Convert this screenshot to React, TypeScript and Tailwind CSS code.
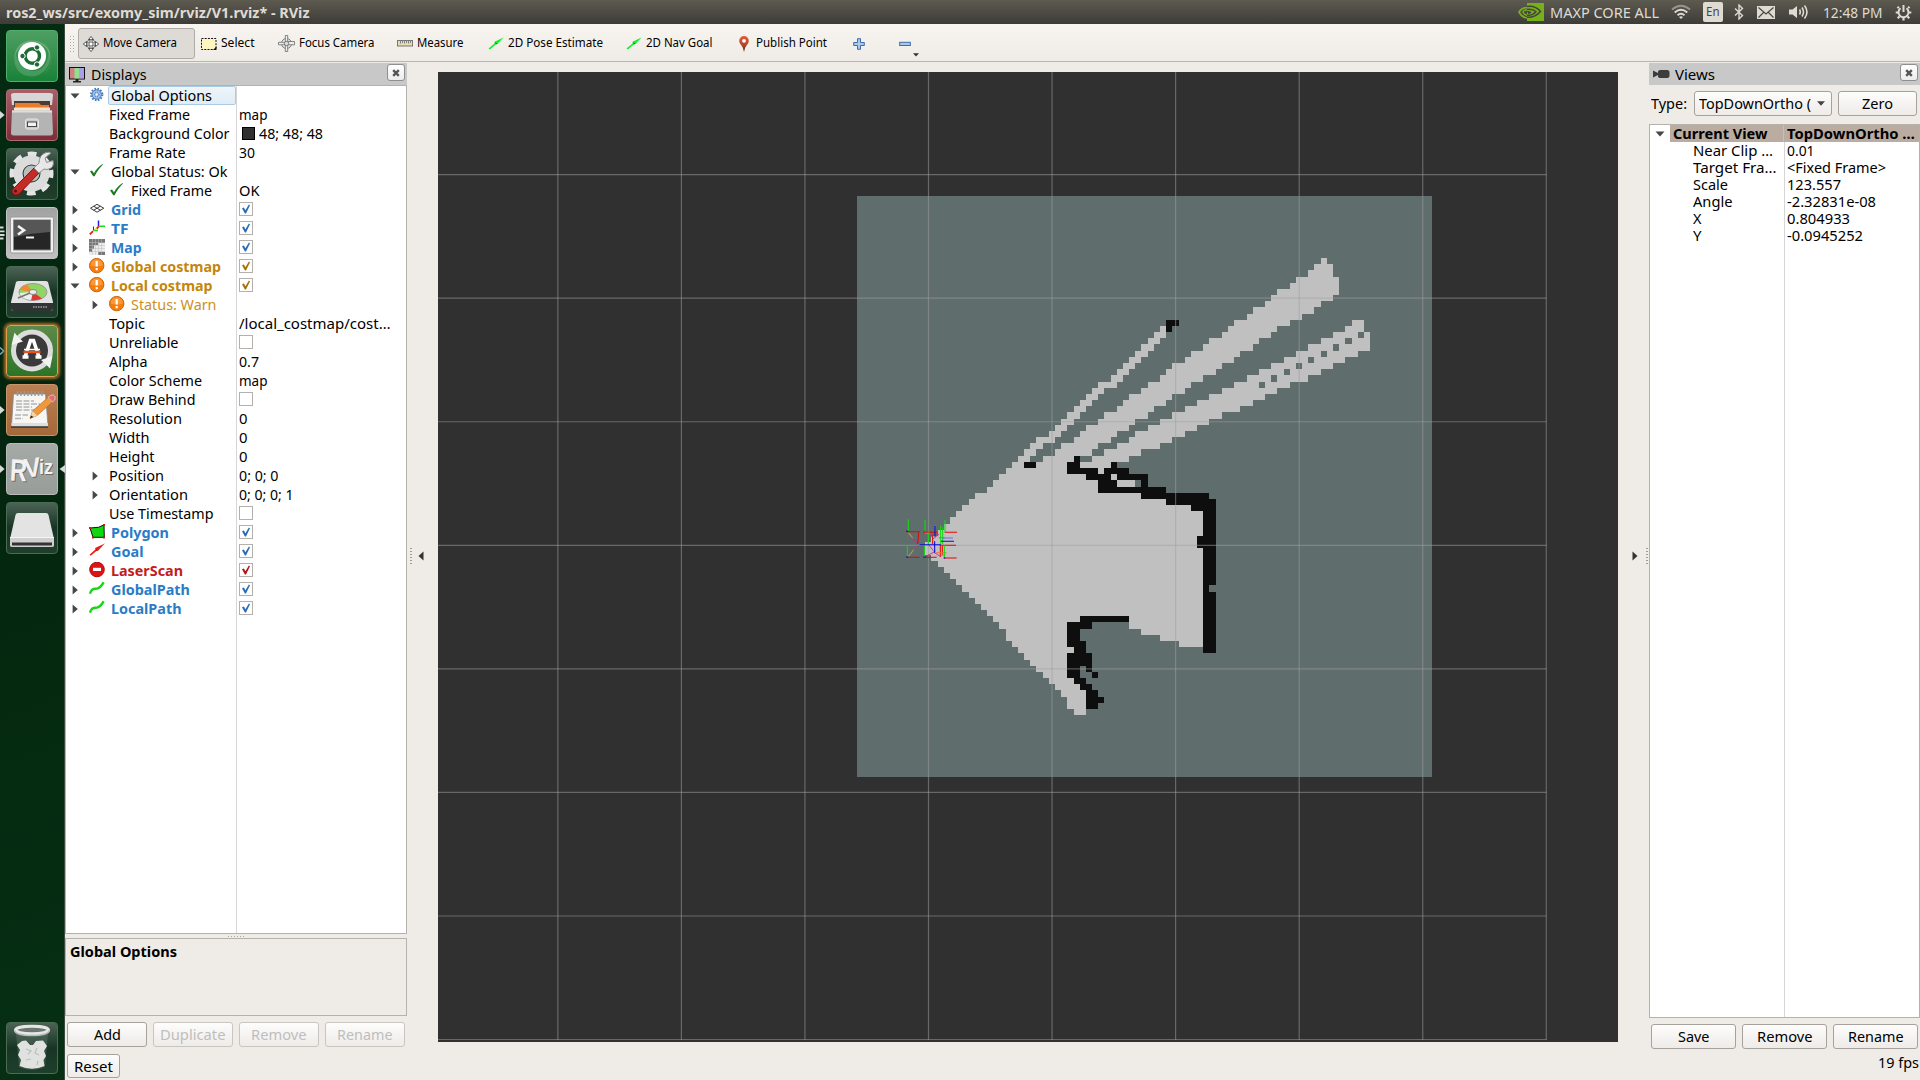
import { useLayoutEffect, useRef, type ReactNode } from "react";

/** One line of text, condensed or widened to the given width. */
function Fit({ w, className = "", children }: { w: number; className?: string; children: ReactNode }) {
  const ref = useRef<HTMLSpanElement>(null);
  useLayoutEffect(() => {
    const el = ref.current;
    if (el && el.offsetWidth) {
      el.style.transform = "none";
      const natural = el.getBoundingClientRect().width;
      el.style.transform = `scaleX(${w / natural})`;
    }
  }, [w]);
  return (
    <span className="block shrink-0" style={{ width: w }}>
      <span ref={ref} className={"inline-block origin-left whitespace-pre " + className}>
        {children}
      </span>
    </span>
  );
}

/* ---------- tree icons ---------- */

const Gear = () => (
  <svg width="16" height="16" viewBox="0 0 16 16">
    <circle cx="7.7" cy="7.5" r="5.6" fill="none" stroke="#4a7dbd" strokeWidth="2.2" strokeDasharray="1.6 1.33" />
    <circle cx="7.7" cy="7.5" r="4.7" fill="#9dc0e8" stroke="#4679b8" strokeWidth="1" />
    <circle cx="7.7" cy="7.5" r="2.3" fill="none" stroke="#4679b8" strokeWidth="1" strokeDasharray="1.2 0.8" />
    <circle cx="7.7" cy="7.5" r="1" fill="#fff" />
  </svg>
);
const Tick = () => (
  <svg width="16" height="16" viewBox="0 0 16 16">
    <path d="M1 8.2 L3 7.4 L5 10.3 C7 6.5 9.5 3.5 13.6 1 L14 1.4 C10.5 4.8 7.8 8.6 5.6 13.2 L4.2 13.2 Z" fill="#1f7a22" />
  </svg>
);
const GridIcon = () => (
  <svg width="16" height="16" viewBox="0 0 16 16" fill="none" stroke="#3c3c3c" strokeWidth="1">
    <path d="M1.5 7.2 L8 3.3 L14.8 7.2 L8 11.2 Z M4.7 5.2 L11.4 9.2 M11.4 5.2 L4.7 9.2" />
  </svg>
);
const TfIcon = () => (
  <svg width="16" height="16" viewBox="0 0 16 16" fill="none" strokeWidth="1.5">
    <path d="M9.5 6 V.5" stroke="#2020e8" />
    <path d="M4.5 10.5 V6.5" stroke="#2020e8" strokeWidth="1" />
    <path d="M10 6.3 H16 M4.500 10.500 H9" stroke="#18dd18" />
    <path d="M9.800 6.500 L7.500 8.800 M4 11.200 L.8 14.300" stroke="#e81818" strokeWidth="1.800" />
    <path d="M4.500 10.500 L8 8" stroke="#e8c018" strokeWidth="1" />
  </svg>
);
const MapIcon = () => (
  <svg width="16" height="16" viewBox="0 0 16 16">
    <path fill="#ececec" d="M0 0h16v16H0z" />
    <path fill="#777" d="M0 0h7v6H3v7H0zM7 0h9v4H9V6H7zM9 13h7v3H9zM3 6h2v4H3z" />
    <path stroke="#bcbcbc" strokeWidth=".5" d="M0 3.5h16M0 6.5h16M0 9.5h16M0 12.5h16M3.5 0v16M6.5 0v16M9.5 0v16M12.5 0v16" />
  </svg>
);
const Warn = () => (
  <svg width="16" height="16" viewBox="0 0 16 16">
    <circle cx="7.7" cy="7.6" r="7.2" fill="#f57d0c" stroke="#c86408" strokeWidth="1" />
    <path d="M1.6 7.4a6.1 6.1 0 0 1 12.2 0q-6 2-12.2 0z" fill="#ffa34d" opacity=".7" />
    <path d="M6.6 3h2.2v5.6H6.6zM6.6 10h2.2v2.2H6.6z" fill="#fff" />
  </svg>
);
const Poly = () => (
  <svg width="16" height="16" viewBox="0 0 16 16">
    <path d="M1 4 L9.5 3.3 L15 .8 L15.3 13.3 L4 13.3 Z" fill="#10d810" stroke="#111" strokeWidth="1" />
    <path d="M0 3h2v2H0zM14 0h2v2h-2zM3 12.5h2v2H3zM14 12.5h2v2h-2z" fill="#e01010" />
  </svg>
);
const GoalIcon = () => (
  <svg width="16" height="16" viewBox="0 0 16 16">
    <path d="M.5 11.8 L6.5 6.2 L6 5 L15.8 .5 L9.3 7.5 L8 7.4 L1.8 12.8 Z" fill="#f02010" />
    <path d="M6.5 6 L9.2 7.4 L7.8 8z" fill="#901008" />
  </svg>
);
const Stop = () => (
  <svg width="16" height="16" viewBox="0 0 16 16">
    <circle cx="8" cy="7.5" r="7.3" fill="#dd1414" stroke="#b00c0c" strokeWidth="1" />
    <rect x="4" y="5.8" width="8" height="3.2" fill="#fff" />
  </svg>
);
const PathIcon = () => (
  <svg width="16" height="16" viewBox="0 0 16 16">
    <path d="M1 12.8 C2.5 7 5 8 8 7.6 C11.5 7 12 5 14.7 1.2" fill="none" stroke="#14d814" strokeWidth="2.4" />
  </svg>
);

const ICONS = { gear: Gear, tick: Tick, grid: GridIcon, tf: TfIcon, map: MapIcon, warn: Warn, poly: Poly, goal: GoalIcon, stop: Stop, path: PathIcon };

const Arrow = ({ open }: { open: boolean }) => (
  <svg width="10" height="10" viewBox="0 0 10 10" fill="#474747">
    {open ? <path d="M.5 2.5 H9.5 L5 7.5 Z" /> : <path d="M2.6 .5 V9.5 L7.8 5 Z" />}
  </svg>
);

const Check = ({ on, color = "#2a6cb8" }: { on: boolean; color?: string }) => (
  <svg width="14" height="14" viewBox="0 0 14 14" className="block">
    <rect x=".5" y=".5" width="13" height="13" fill="#fff" stroke="#b4b0ab" />
    {on && <path d="M3 6.3 L4.9 5.6 L6.4 8.2 L9.9 2.6 L11 3.2 L7 11.4 L5.9 11.4 Z" fill={color} />}
  </svg>
);

/* ---------- displays tree ---------- */

type Row = {
  t: string;
  w: number;
  d?: number;
  open?: boolean;
  icon?: keyof typeof ICONS;
  cls?: string;
  v?: string;
  vw?: number;
  check?: string;
  swatch?: boolean;
  sel?: boolean;
};
const BLUE = "font-bold text-[#2a7cc7]";
const AMBER = "font-bold text-[#c4860c]";
const ROWS: Row[] = [
  { t: "Global Options", w: 101, open: true, icon: "gear", sel: true },
  { t: "Fixed Frame", w: 81, d: 1, v: "map", vw: 28.5 },
  { t: "Background Color", w: 120.5, d: 1, v: "48; 48; 48", vw: 64, swatch: true },
  { t: "Frame Rate", w: 76.5, d: 1, v: "30", vw: 16 },
  { t: "Global Status: Ok", w: 116.5, open: true, icon: "tick" },
  { t: "Fixed Frame", w: 81, d: 1, icon: "tick", v: "OK", vw: 20.5 },
  { t: "Grid", w: 30, open: false, icon: "grid", cls: BLUE, check: "#2a6cb8" },
  { t: "TF", w: 17.5, open: false, icon: "tf", cls: BLUE, check: "#2a6cb8" },
  { t: "Map", w: 30.5, open: false, icon: "map", cls: BLUE, check: "#2a6cb8" },
  { t: "Global costmap", w: 110, open: false, icon: "warn", cls: AMBER, check: "#a8700a" },
  { t: "Local costmap", w: 101.5, open: true, icon: "warn", cls: AMBER, check: "#a8700a" },
  { t: "Status: Warn", w: 85.5, d: 1, open: false, icon: "warn", cls: "text-[#cc8f1c]" },
  { t: "Topic", w: 36, d: 1, v: "/local_costmap/cost…", vw: 151.5 },
  { t: "Unreliable", w: 69.5, d: 1, check: "" },
  { t: "Alpha", w: 38.5, d: 1, v: "0.7", vw: 20 },
  { t: "Color Scheme", w: 93, d: 1, v: "map", vw: 28.5 },
  { t: "Draw Behind", w: 86.5, d: 1, check: "" },
  { t: "Resolution", w: 73, d: 1, v: "0", vw: 8.5 },
  { t: "Width", w: 40.5, d: 1, v: "0", vw: 8.5 },
  { t: "Height", w: 45.5, d: 1, v: "0", vw: 8.5 },
  { t: "Position", w: 55, d: 1, open: false, v: "0; 0; 0", vw: 39.5 },
  { t: "Orientation", w: 79, d: 1, open: false, v: "0; 0; 0; 1", vw: 54.5 },
  { t: "Use Timestamp", w: 104.5, d: 1, check: "" },
  { t: "Polygon", w: 58, open: false, icon: "poly", cls: BLUE, check: "#2a6cb8" },
  { t: "Goal", w: 32.5, open: false, icon: "goal", cls: BLUE, check: "#2a6cb8" },
  { t: "LaserScan", w: 72, open: false, icon: "stop", cls: "font-bold text-[#c41c1c]", check: "#b01818" },
  { t: "GlobalPath", w: 79, open: false, icon: "path", cls: BLUE, check: "#2a6cb8" },
  { t: "LocalPath", w: 70.5, open: false, icon: "path", cls: BLUE, check: "#2a6cb8" },
];

function TreeRow({ r }: { r: Row }) {
  const Icon = r.icon ? ICONS[r.icon] : null;
  return (
    <div className="flex h-[19px] items-center leading-[19px]">
      <div className="flex h-full w-[170px] shrink-0 items-center">
        <div className={r.d ? "w-5 shrink-0" : "w-0"} />
        <div className="flex w-[23px] shrink-0 items-center pl-[4px]">{r.open !== undefined && <Arrow open={r.open} />}</div>
        {Icon && (
          <div className="w-[19px] shrink-0 pb-px">
            <Icon />
          </div>
        )}
        <div
          className={
            "flex h-[19px] flex-1 items-center border pl-[2px] " +
            (r.sel ? "rounded-[2px] border-[#a9cce4] bg-linear-to-b from-[#eef5fb] to-[#e0ecf5]" : "border-transparent") +
            (Icon ? "" : " -ml-[3px]")
          }
        >
          <Fit w={r.w} className={r.cls}>
            {r.t}
          </Fit>
        </div>
      </div>
      <div className="flex h-full items-center pl-[3px]">
        {r.swatch && <div className="mr-[4px] ml-[3px] h-[13px] w-[13px] border border-black bg-[#303030]" />}
        {r.v && <Fit w={r.vw!}>{r.v}</Fit>}
        {r.check !== undefined && (
          <div className="pb-px">
            <Check on={r.check !== ""} color={r.check} />
          </div>
        )}
      </div>
    </div>
  );
}

/* ---------- costmap: [row, start, end, start, end, ...] in cells ---------- */

const FREE: number[][] = [
  [10, 75, 76], [11, 74, 77], [12, 73, 77], [13, 71, 78], [14, 70, 78], [15, 68, 78], [16, 67, 77], [17, 66, 75],
  [18, 64, 74], [19, 63, 72], [20, 61, 70, 80, 82], [21, 49, 50, 60, 68, 79, 82], [22, 48, 50, 59, 67, 77, 81, 82, 83],
  [23, 47, 49, 57, 65, 75, 79, 80, 83], [24, 46, 48, 56, 64, 73, 77, 78, 83], [25, 45, 47, 54, 62, 71, 75, 76, 81],
  [26, 44, 46, 53, 61, 69, 73, 74, 79], [27, 43, 45, 51, 59, 67, 71, 72, 77], [28, 42, 44, 50, 58, 65, 69, 70, 75],
  [29, 41, 43, 49, 56, 63, 67, 68, 73], [30, 39, 42, 47, 54, 61, 65, 66, 70], [31, 38, 40, 46, 53, 59, 68],
  [32, 37, 39, 44, 51, 57, 66], [33, 36, 38, 43, 50, 55, 64], [34, 35, 37, 42, 48, 53, 62], [35, 34, 36, 40, 47, 51, 59],
  [36, 33, 35, 39, 45, 49, 57], [37, 32, 34, 37, 44, 47, 55], [38, 31, 33, 36, 42, 45, 53], [39, 29, 32, 35, 41, 44, 51],
  [40, 28, 30, 33, 39, 42, 49], [41, 27, 29, 32, 38, 40, 46], [42, 26, 28, 30, 35, 38, 44], [43, 25, 41], [44, 24, 40],
  [45, 23, 42], [46, 22, 45], [47, 21, 39], [48, 19, 46], [49, 18, 50], [50, 17, 54], [51, 16, 56], [52, 15, 56],
  [53, 14, 56], [54, 13, 56], [55, 12, 56], [56, 11, 56], [57, 11, 56], [58, 12, 56], [59, 13, 56], [60, 14, 56],
  [61, 15, 56], [62, 16, 56], [63, 17, 56], [64, 18, 56], [65, 19, 56], [66, 20, 56], [67, 21, 56], [68, 22, 56],
  [69, 23, 34, 44, 56], [70, 24, 34, 46, 56], [71, 24, 34, 49, 56], [72, 25, 34, 52, 56], [73, 26, 35], [74, 27, 34],
  [75, 28, 34], [76, 29, 34], [77, 30, 34], [78, 31, 35], [79, 32, 36], [80, 33, 37], [81, 34, 37], [82, 34, 37], [83, 35, 37],
];
const WALLS: number[][] = [
  [20, 50, 52], [21, 50, 51], [42, 35, 36], [43, 27, 29, 34, 36, 41, 42], [44, 34, 39, 40, 44], [45, 37, 41, 42, 47],
  [46, 39, 42, 46, 47], [47, 39, 50], [48, 46, 57], [49, 50, 58], [50, 54, 58], [51, 56, 58], [52, 56, 58], [53, 56, 58],
  [54, 56, 58], [55, 55, 58], [56, 55, 58], [57, 56, 58], [58, 56, 58], [59, 56, 58], [60, 56, 58], [61, 56, 58],
  [62, 56, 58], [63, 56, 57], [64, 56, 58], [65, 56, 58], [66, 56, 58], [67, 56, 58], [68, 36, 44, 56, 58],
  [69, 34, 38, 56, 58], [70, 34, 36, 56, 58], [71, 34, 36, 56, 58], [72, 34, 37, 56, 58], [73, 35, 37, 56, 58],
  [74, 34, 38], [75, 34, 38], [76, 34, 36, 37, 38], [77, 34, 36, 38, 39], [78, 35, 37], [79, 36, 38], [80, 37, 39],
  [81, 37, 40], [82, 37, 39],
];
const CELL = 6.178;
const X = (c: number) => Math.round(857.3 + c * CELL);
const Y = (r: number) => Math.round(196.2 + r * CELL);
function cells(data: number[][]) {
  let d = "";
  for (const [r, ...runs] of data)
    for (let i = 0; i < runs.length; i += 2) d += `M${X(runs[i])} ${Y(r)}H${X(runs[i + 1])}V${Y(r + 1)}H${X(runs[i])}Z`;
  return d;
}

const V_LINES = [557.85, 681.4, 804.95, 928.5, 1052.05, 1175.6, 1299.2, 1422.75, 1546.3];
const H_LINES = [174.6, 298.2, 421.75, 545.3, 668.9, 792.4, 916, 1039.5];

function Scene() {
  return (
    <svg width="1180" height="970" viewBox="438 72 1180 970" className="block shrink-0 bg-[#303030]">
      <rect x="857" y="196" width="575" height="581" fill="#5f6e6c" />
      <path d={cells(FREE)} fill="#c0c0c0" shapeRendering="crispEdges" />
      <path d={cells(WALLS)} fill="#0e0e0e" shapeRendering="crispEdges" />
      <g stroke="#a0a0a0" strokeOpacity=".5" strokeWidth="1.2">
        {V_LINES.map((x) => (
          <line key={x} x1={x} x2={x} y1="72" y2="1040" />
        ))}
        {H_LINES.map((y) => (
          <line key={y} x1="438" x2="1546.5" y1={y} y2={y} />
        ))}
      </g>
      <g transform="translate(850 440) scale(.33333)" fill="none" strokeWidth="3.2">
        <path stroke="#a0a050" d="M175 278 L190 296 M175 350 L192 328" />
        <path stroke="#d82088" strokeWidth="2.600" d="M186 292 L206 314 L190 332 M238 280 L250 296 L268 282 M236 314 L250 332 M230 348 L256 334 M250 336 L272 350" />
        <path stroke="#e00808" d="M170 275 H210 M220 277 H262 M284 277 H321 M206 278 L203 312 M272 316 H318 M170 352 H209 M220 352 H260 M282 354 H320 M271 312 V350 M277 318 V344 M248 284 V312" />
        <path stroke="#f07030" d="M258 338 H290 M272 346 H286 M225 280 H240" />
        <path stroke="#12d812" d="M175 238 V273 M225 240 V272 M285 240 V276 M272 256 V314 M278 262 V312 M235 278 V314 M172 316 V350 M223 314 V352 M283 316 V354" />
        <path stroke="#7070d8" d="M278 294 H309 M256 256 V276" />
        <path stroke="#0808d8" d="M255 258 V290 M273 304 H312 M254 304 V338 M208 314 H272 M168 274 H175 M168 351 H175 M220 351 H227 M281 354 H286" />
        <path stroke="#10b0a0" d="M266 293 H284 M203 315 H209" />
      </g>
    </svg>
  );
}

/* ---------- launcher ---------- */

const Tile = ({ cls, children }: { cls: string; children: ReactNode }) => (
  <div className={"h-[52px] w-[52px] shrink-0 overflow-hidden rounded-[4px] border " + cls}>
    <svg width="52" height="52" viewBox="0 0 52 52" className="-m-px block">
      {children}
    </svg>
  </div>
);
const DARK = "border-[#4c6a56] bg-linear-to-b from-[#4b6355] via-[#173524] to-[#1f3f2c]";
const Pip = ({ cls = "" }: { cls?: string }) => (
  <svg width="5" height="10" viewBox="0 0 5 10" className={"shrink-0 " + cls}>
    <path d="M0 1 L4.6 5 L0 9Z" fill="#d8d8d8" />
  </svg>
);

const Launcher = () => (
  <div className="flex w-[65px] shrink-0 flex-col border-r border-[#3c4c40] bg-[linear-gradient(160deg,#042c12_0%,#03240f_35%,#04290f_60%,#062f14_100%)] pt-[6px]">
    <div className="flex flex-col gap-[7px]">
      <div className="flex items-center pl-[6px]">
        <Tile cls="border-[#4fae6c] bg-linear-to-b from-[#4d9f62] to-[#168238]">
          <path d="M8 30 C8 12 24 6 38 14 C46 20 48 36 38 44 C50 32 44 16 30 12 C20 10 10 18 8 30Z" fill="#fff" opacity=".22" />
          <path d="M38 12 C52 26 40 50 22 46 C10 44 6 32 10 24 C12 40 30 46 38 36 C44 28 44 18 38 12Z" fill="#fff" opacity=".16" />
          <circle cx="26" cy="26" r="14" fill="#fff" />
          <circle cx="26.3" cy="26" r="7.2" fill="none" stroke="#1c6c34" strokeWidth="3.4" />
          <g fill="#1c6c34" stroke="#fff" strokeWidth="1">
            <circle cx="16.5" cy="26" r="2.7" />
            <circle cx="31" cy="17.5" r="2.7" />
            <circle cx="31" cy="34.5" r="2.7" />
          </g>
        </Tile>
      </div>
      <div className="flex items-center">
        <Pip />
        <div className="pl-px">
          <Tile cls="border-[#b06a72] bg-linear-to-b from-[#a95f68] to-[#7c2d38]">
            <path d="M5 6 Q5 4 8 4 H44 Q47 4 47 6 L46 16 H6Z" fill="#d6d6d6" />
            <path d="M8 12 H44 V22 H8Z" fill="#4b3b34" />
            <path d="M9 14 H33 L35 16 H43 V22 H9Z" fill="#e67c2c" />
            <path d="M8 18.5 H44 V22 H8Z" fill="#f8e2cc" />
            <path d="M6 21.5 H46 L47 44 Q47 46.500 44 46.500 H8 Q5 46.500 5 44Z" fill="#b4b4b4" />
            <path d="M6 21.500 H46 V23.500 H6Z" fill="#ddd" />
            <rect x="19.500" y="30" width="13" height="10" rx="2" fill="#c9c9c9" stroke="#e6e6e6" />
            <rect x="21.500" y="33" width="9" height="4.500" fill="#f2f2f2" stroke="#444" />
          </Tile>
        </div>
      </div>
      <div className="flex items-center pl-[6px]">
        <Tile cls={DARK}>
          <circle cx="25.500" cy="25.500" r="19" fill="none" stroke="#e4e4e4" strokeWidth="6" strokeDasharray="8.500 6.420" strokeDashoffset="4.200" />
          <circle cx="25.500" cy="25.500" r="13.500" fill="none" stroke="#dcdcdc" strokeWidth="9" />
          <circle cx="25.500" cy="25.500" r="8" fill="#bdbdbd" />
          <path d="M7.500 40.500 L28 20 L33 25 L13 46 Q9 48.500 6.500 45 Q4.800 42.500 7.500 40.500Z" fill="#c42a26" stroke="#8e1410" strokeWidth="1" />
          <path d="M28 20 L33 15 Q33 7 40 4.500 Q43 3.700 45 5 L39 10 L40.500 14.500 L47 12.500 Q49 20 41 21.500 L38 21 L33 25Z" fill="#e8e8e8" stroke="#8c8c8c" strokeWidth="1" />
          <circle cx="9.500" cy="43" r="1.600" fill="#601010" />
        </Tile>
      </div>
      <div className="flex items-center">
        <svg width="5" height="14" viewBox="0 0 5 14" className="shrink-0">
          <path d="M0 1.500H3.500M0 5.300H4.500M0 9H4.500M0 12.500H3.500" stroke="#d8d8d8" strokeWidth="1.800" />
        </svg>
        <div className="pl-px">
          <Tile cls="border-[#c4c4c4] bg-linear-to-b from-[#a2a2a2] to-[#c0c0c0]">
            <rect x="4.500" y="10" width="43" height="36" rx="1.500" fill="#f0f0f0" stroke="#999" />
            <rect x="7.500" y="13" width="37" height="30" fill="#262626" stroke="#888" />
            <path d="M8 13.500 H44 V25 Q26 26 8 30Z" fill="#565656" />
            <path d="M12 19 L18 23.200 L12 27.500" fill="none" stroke="#f4f4f4" strokeWidth="2.600" />
            <path d="M20 30.500 H28" stroke="#f4f4f4" strokeWidth="2" />
          </Tile>
        </div>
      </div>
      <div className="flex items-center pl-[6px]">
        <Tile cls={DARK}>
          <path d="M10 16 Q11 15 13 15 H39 Q41 15 42 16 L47 36 V42 Q47 45 44 45 H8 Q5 45 5 42 V36Z" fill="#e2e2e2" />
          <path d="M5 37 H47 V42 Q47 45 44 45 H8 Q5 45 5 42Z" fill="#303434" />
          <ellipse cx="27" cy="26" rx="14" ry="8.500" fill="#8fd664" stroke="#999" />
          <path d="M27 26 L14 24 Q15 20 21 18.500Z" fill="#f08c30" />
          <path d="M27 26 L36 32.500 Q30 35 25 34Z" fill="#e03838" />
          <path d="M27 26 L25 34 Q15 33 13.500 27Z" fill="#eee" />
          <ellipse cx="27" cy="26" rx="4" ry="2.500" fill="#e8efe4" stroke="#888" />
          <path d="M12 32 L24 27" stroke="#777" strokeWidth="1.500" />
          <path d="M27 41H42" stroke="#888" strokeWidth="2" strokeDasharray="1.500 1" />
        </Tile>
      </div>
      <div className="flex items-center">
        <svg width="5" height="10" viewBox="0 0 5 10" className="shrink-0">
          <path d="M0 1.500 L3.800 5 L0 8.500" fill="none" stroke="#6fb7d8" strokeWidth="1.300" />
        </svg>
        <div className="pl-px">
          <Tile cls="border-[#e0a050] bg-linear-to-b from-[#5c8a48] to-[#2b7428] shadow-[0_0_3px_2px_#a86c28]">
            <circle cx="26" cy="25.500" r="18.500" fill="#3a3a3a" stroke="#dcdcdc" strokeWidth="5" />
            <path d="M5.500 20 L8.500 7.500 L12 12 L17 16.500Z M46.500 31 L44 43.500 L40 39.500 L35 35Z" fill="#f2f2f2" />
            <path d="M19 32 L24.500 15.500 H27.500 L33 32" fill="none" stroke="#fff" strokeWidth="3.600" />
            <path d="M16.500 32 H22.500 M29.500 32 H35.500" stroke="#fff" strokeWidth="3.500" />
            <path d="M17.500 27 H34.500" stroke="#e8501c" strokeWidth="2.600" />
            <path d="M18 24.500 H34" stroke="#fff" strokeWidth="1.500" />
          </Tile>
        </div>
      </div>
      <div className="flex items-center">
        <Pip />
        <div className="pl-px">
          <Tile cls="border-[#c89468] bg-linear-to-b from-[#b98054] to-[#a5683a]">
            <path d="M7.500 10 H39.500 L42 42 H5.500Z" fill="#f6f6f4" stroke="#888" strokeWidth=".8" />
            <path d="M5.500 39 H42 V43 H5.500Z" fill="#dedede" />
            <path d="M5 43 H42" stroke="#333" strokeWidth="1.500" />
            <path d="M11.500 7v5M15 7v5M18.500 7v5M22 7v5M25.500 7v5M29 7v5M32.500 7v5M36 7v5" stroke="#999" strokeWidth="1.500" />
            <path d="M10 17H28M10 20H34M10 23H26M10 26H30M9 31H22M9 34.500H17" stroke="#b4b4b4" strokeWidth="1.300" strokeDasharray="6 1.500" />
            <path d="M24 34.500 L26.500 27 L42 13.500 L46.500 18 L31 31.500Z" fill="#f0983c" stroke="#b86c1c" strokeWidth=".7" />
            <path d="M24 34.500 L26.500 27 L31 31.500Z" fill="#f1d5ac" />
            <path d="M24 34.500 L25 31.500 L27.500 33Z" fill="#222" />
            <path d="M42 13.500 L44.500 11.500 Q48 10 49 13 Q49.500 15 48.500 16.200 L46.500 18Z" fill="#e56a6a" stroke="#ccc" />
          </Tile>
        </div>
      </div>
      <div className="flex items-center">
        <Pip />
        <div className="pl-px">
          <Tile cls="border-[#b8bcb8] bg-linear-to-b from-[#a6aaa7] to-[#999d9a]">
            <g fontFamily="Liberation Sans, sans-serif" fontWeight="700">
              <g fill="#6c6c6c" transform="translate(1 1)">
                <text x="4" y="38" fontSize="31" textLength="17" lengthAdjust="spacingAndGlyphs" transform="rotate(3 12 26)">R</text>
                <text x="18" y="34" fontSize="27" textLength="17" lengthAdjust="spacingAndGlyphs" transform="rotate(-8 26 26)">V</text>
                <text x="33" y="31" fontSize="21" textLength="14" lengthAdjust="spacingAndGlyphs">iz</text>
              </g>
              <g fill="#f2f2f2">
                <text x="4" y="38" fontSize="31" textLength="17" lengthAdjust="spacingAndGlyphs" transform="rotate(3 12 26)">R</text>
                <text x="18" y="34" fontSize="27" textLength="17" lengthAdjust="spacingAndGlyphs" transform="rotate(-8 26 26)">V</text>
                <text x="33" y="31" fontSize="21" textLength="14" lengthAdjust="spacingAndGlyphs">iz</text>
              </g>
            </g>
          </Tile>
        </div>
        <svg width="6" height="8" viewBox="0 0 6 8" className="ml-px shrink-0">
          <path d="M6 0 V8 L.5 4Z" fill="#d8d8d8" />
        </svg>
      </div>
      <div className="flex items-center pl-[6px]">
        <Tile cls={DARK}>
          <path d="M9.500 13 Q10 11 12 11 H40 Q42 11 42.500 13 L48 37 V42 Q48 45 46 45 H6 Q4 45 4 42 V37Z" fill="#e3e3e3" />
          <path d="M4 35.500 H48 V42 Q48 45 46 45 H6 Q4 45 4 42Z" fill="#cfcfcf" />
          <path d="M4 35.500 H48" stroke="#f5f5f5" />
          <rect x="6" y="40.500" width="40" height="3" fill="#343434" />
        </Tile>
      </div>
    </div>
    <div className="mt-auto pb-[6px] pl-[6px]">
      <Tile cls={DARK}>
        <path d="M10 12 L13 45 Q26 51 39 45 L42 12Z" fill="#6f8578" opacity=".35" />
        <path d="M11 23 L16 19 L20 18.500 L24 23 L27 23 L30 19 L37 18.500 L41 24 L38 29 L40 34 L37.500 38 L38.500 44 Q26 49.500 13.500 44 L15 38 L12 33 L14 28Z" fill="#e0e2e0" />
        <path d="M20 27 L25 29 L22 32 M31 26 L29 31 L33 33 M20 38 L25 37 M32 39 L31 43" stroke="#bcc0bc" fill="none" strokeWidth="1.200" />
        <ellipse cx="26" cy="8" rx="16.500" ry="3.800" fill="#6c776f" stroke="#e6e6e6" strokeWidth="3" />
        <path d="M8.500 8.500 Q10 13.500 26 13.500 Q42 13.500 43.500 8.500" fill="none" stroke="#b8b8b8" strokeWidth="1.500" />
      </Tile>
    </div>
  </div>
);

/* ---------- controls ---------- */

const Btn = ({ cls, w, children, off }: { cls: string; w: number; children: string; off?: boolean }) => (
  <div
    className={
      "flex shrink-0 items-center justify-center rounded-[3px] border bg-linear-to-b from-[#fdfdfc] to-[#eeebe8] " +
      (off ? "border-[#c9c5c0] text-[#bebebe] " : "border-[#a5a19c] text-black ") +
      cls
    }
  >
    <Fit w={w}>{children}</Fit>
  </div>
);

const CloseBtn = () => (
  <div className="flex h-[17px] w-[18px] items-center justify-center rounded-[3px] border border-[#8f8f8f] bg-linear-to-b from-white to-[#ececec]">
    <svg width="8" height="8" viewBox="0 0 8 8">
      <path d="M1.200 1.200 L6.800 6.800 M6.800 1.200 L1.200 6.800" stroke="#555" strokeWidth="2.400" />
    </svg>
  </div>
);

const GreenArrow = () => (
  <svg width="16" height="16" viewBox="0 0 16 16">
    <path d="M.5 12.500 L7 7 L6.500 5.800 L15.500 1.500 L9.500 8 L8.300 8 L2 13.500Z" fill="#14f02c" />
    <path d="M6.500 6 L9.500 7.800 L8 8.500Z" fill="#0a8018" />
  </svg>
);

const Toolbar = () => (
  <div className="flex h-[38px] shrink-0 items-center border-b border-[#b8b4af] bg-linear-to-b from-[#f8f5f0] to-[#efebe7] pt-[2px] text-[12.500px]">
    <div className="mr-[4px] ml-[4px] h-[17px] w-[5px] bg-[radial-gradient(circle,#b0aca6_0.700px,transparent_1px)] bg-[length:3px_3px]" />
    <div className="flex h-[31px] w-[117px] items-center rounded-[3px] border border-[#aeaaa5] bg-[#dedad6] pl-[4px]">
      <svg width="16" height="16" viewBox="0 0 16 16" fill="#fff" stroke="#444" strokeWidth=".9">
        <path d="M8 .5 L10.500 3.500 H9 V7 H12.500 V5.500 L15.700 8 L12.500 10.500 V9 H9 V12.500 H10.500 L8 15.500 L5.500 12.500 H7 V9 H3.500 V10.500 L.3 8 L3.500 5.500 V7 H7 V3.500 H5.500Z" />
        <circle cx="8" cy="8" r="4.600" fill="none" strokeWidth=".7" />
      </svg>
      <div className="ml-[4px]"><Fit w={74}>Move Camera</Fit></div>
    </div>
    <svg width="17" height="16" viewBox="0 0 17 16" className="ml-[5px]">
      <rect x="1.500" y="2.500" width="14.500" height="11" fill="#fdf6c0" stroke="#111" strokeDasharray="2 1.200" />
      <path d="M16.500 10.500 V14 H13Z" fill="#111" />
    </svg>
    <div className="ml-[4px]"><Fit w={33.500}>Select</Fit></div>
    <svg width="17" height="17" viewBox="0 0 17 17" className="ml-[23px]" fill="none" stroke="#777" strokeWidth="1">
      <circle cx="8.500" cy="8.500" r="5" />
      <path d="M7.300 .5H9.700V6.500H16.500V9.800H9.700V16.500H7.300V9.800H.5V7.300H7.300Z" fill="#eee" strokeWidth=".9" />
      <circle cx="8.500" cy="8.500" r="2.200" fill="#ddd" />
    </svg>
    <div className="ml-[4px]"><Fit w={75.500}>Focus Camera</Fit></div>
    <svg width="16" height="16" viewBox="0 0 16 16" className="ml-[23px]">
      <rect x=".5" y="4.500" width="15" height="5.500" fill="#e8dca8" stroke="#777" />
      <path d="M3.500 5v2.500M5.500 5v2M7.500 5v2.500M9.500 5v2M11.500 5v2.500M13.500 5v2" stroke="#777" strokeWidth=".9" />
    </svg>
    <div className="ml-[4px]"><Fit w={46.500}>Measure</Fit></div>
    <div className="ml-[24px]"><GreenArrow /></div>
    <div className="ml-[4px]"><Fit w={95}>2D Pose Estimate</Fit></div>
    <div className="ml-[23px]"><GreenArrow /></div>
    <div className="ml-[4px]"><Fit w={66.500}>2D Nav Goal</Fit></div>
    <svg width="10" height="16" viewBox="0 0 10 16" className="ml-[27px]">
      <path d="M5 16 L4.200 13 Q3.500 10.500 1.300 8 Q.2 6.500 .2 4.800 A4.800 4.800 0 0 1 9.800 4.800 Q9.800 6.500 8.700 8 Q6.500 10.500 5.800 13Z" fill="url(#pin)" />
      <circle cx="5" cy="4.800" r="1.900" fill="#fff" />
      <defs>
        <linearGradient id="pin" x1="0" y1="0" x2="0" y2="1">
          <stop offset="0" stopColor="#e5593a" />
          <stop offset=".5" stopColor="#b9492c" />
          <stop offset="1" stopColor="#50301c" />
        </linearGradient>
      </defs>
    </svg>
    <div className="ml-[7px]"><Fit w={71}>Publish Point</Fit></div>
    <svg width="12" height="12" viewBox="0 0 12 12" className="ml-[26px]">
      <path d="M4.500 .7H7.500V4.500H11.300V7.500H7.500V11.300H4.500V7.500H.7V4.500H4.500Z" fill="#a9c8ea" stroke="#3a6cae" />
    </svg>
    <div className="relative ml-[34px]">
      <svg width="12" height="12" viewBox="0 0 12 12">
        <rect x=".7" y="4.300" width="10.600" height="3.200" fill="#a9c8ea" stroke="#3a6cae" />
      </svg>
      <svg width="6" height="4" viewBox="0 0 6 4" className="absolute top-[15px] left-[14px]">
        <path d="M0 .3H6L3 3.500Z" fill="#333" />
      </svg>
    </div>
  </div>
);

const VIEWS: [string, number, string, number][] = [
  ["Near Clip …", 80, "0.01", 27.5],
  ["Target Fra…", 83.5, "<Fixed Frame>", 99],
  ["Scale", 35, "123.557", 54],
  ["Angle", 39.5, "-2.32831e-08", 89],
  ["X", 8.5, "0.804933", 63],
  ["Y", 8.5, "-0.0945252", 76],
];

const Dots = ({ cls }: { cls: string }) => (
  <div className={"h-[17px] w-[2px] shrink-0 bg-[radial-gradient(circle,#9f9b96_0.700px,transparent_1px)] bg-[length:2px_3px] " + cls} />
);

export default function App() {
  return (
    <div className="flex h-[1080px] w-[1920px] flex-col overflow-hidden bg-[#efebe7] font-['Noto_Sans',sans-serif] text-[14px] text-black">
      <div className="flex h-[24px] shrink-0 items-center bg-linear-to-b from-[#5d5a50] to-[#3d3c38] pl-[6px] text-[#dfdbd2]">
        <Fit w={303.5} className="text-[15px] font-bold">ros2_ws/src/exomy_sim/rviz/V1.rviz* - RViz</Fit>
        <div className="ml-auto flex items-center">
          <svg width="26" height="18" viewBox="0 0 26 18">
            <path d="M9 0H26V18H9Z" fill="#76b01a" />
            <path d="M9 4.500 Q3.500 5 1 9 Q4 14.500 9.500 15" fill="none" stroke="#76b01a" strokeWidth="1.700" />
            <path d="M9 3.500 Q17 2 22.500 8.500 Q17 14.800 9 14.300" fill="none" stroke="#44433c" strokeWidth="1.500" />
            <path d="M9 6.500 Q14.500 5.500 18 8.800 Q14 13 9 12.200" fill="none" stroke="#44433c" strokeWidth="1.400" />
            <path d="M9 6.700 Q5.800 7.200 4.800 9 Q6.300 12 9 12.300" fill="none" stroke="#76b01a" strokeWidth="1.400" />
            <path d="M9 8 Q13 7.500 13.500 9.500 L10.500 11.500Z" fill="#44433c" />
          </svg>
          <div className="ml-[6px]"><Fit w={109} className="text-[15px]">MAXP CORE ALL</Fit></div>
          <svg width="20" height="16" viewBox="0 0 20 16" className="ml-[12px]" fill="none" stroke="#dfdbd2" strokeWidth="1.800">
            <path d="M1 5.500 Q10 -2 19 5.500" stroke="#98958c" />
            <path d="M3.700 8.500 Q10 3 16.300 8.500 M6.500 11.300 Q10 8.300 13.500 11.300" />
            <path d="M8 13 Q10 11.500 12 13 L10 15Z" fill="#dfdbd2" stroke="none" />
          </svg>
          <div className="ml-[12px] flex h-[20px] w-[20px] items-center justify-center rounded-[2px] bg-[#dfdbd2] pt-px text-[12.5px] text-[#45443e]">
            <Fit w={13.5}>En</Fit>
          </div>
          <svg width="10" height="16" viewBox="0 0 10 16" className="ml-[11px]" fill="none" stroke="#dfdbd2" strokeWidth="1.400">
            <path d="M1 4.500 L8.500 11.500 L5 15 V1 L8.500 4.500 L1 11.500" />
          </svg>
          <svg width="18" height="13" viewBox="0 0 18 13" className="ml-[13px]">
            <rect width="18" height="13" fill="#dfdbd2" />
            <path d="M1.500 1.500 L9 8 L16.500 1.500 M1.500 11.500 L6.500 6.500 M16.500 11.500 L11.500 6.500" fill="none" stroke="#4a4942" strokeWidth="1.200" />
          </svg>
          <svg width="20" height="16" viewBox="0 0 20 16" className="ml-[14px]">
            <path d="M0 5.500H3.500L8 2V14L3.500 10.500H0Z" fill="#dfdbd2" />
            <path d="M10.500 5.500 Q12 8 10.500 10.500 M13 3.500 Q16 8 13 12.500 M15.500 1.500 Q20.500 8 15.500 14.500" fill="none" stroke="#dfdbd2" strokeWidth="1.600" />
          </svg>
          <div className="ml-[14px]"><Fit w={59.5} className="text-[15px]">12:48 PM</Fit></div>
          <svg width="17" height="17" viewBox="0 0 17 17" className="mr-[8px] ml-[13px]" fill="none" stroke="#dfdbd2">
            <path d="M5.500 4.300 A5 5 0 1 0 11.500 4.300" strokeWidth="2" />
            <path d="M8.500 1V8" strokeWidth="2" />
            <path d="M3.800 4 L2.500 2.700 M13.200 4 L14.500 2.700 M3.500 8.500H.7M13.500 8.500H16.300M4.500 12.500L2.700 14.300M12.500 12.500L14.300 14.300M8.500 13.500V16.500" strokeWidth="2.200" />
          </svg>
        </div>
      </div>

      <div className="flex min-h-0 flex-1">
        <Launcher />
        <div className="flex min-w-0 flex-1 flex-col">
          <Toolbar />
          <div className="flex min-h-0 flex-1">
            {/* Displays dock */}
            <div className="flex w-[342px] shrink-0 flex-col pt-px">
              <div className="flex h-[22px] shrink-0 items-center bg-[#c8c8c8] pr-[2px] pl-[4px]">
                <svg width="16" height="17" viewBox="0 0 16 17">
                  <rect x=".5" y="1.500" width="15" height="11.500" fill="#d08080" stroke="#111" />
                  <path fill="#8fe08f" d="M5.500 2H10.500V12.500H5.500Z" />
                  <path fill="#a8a0e8" d="M10.500 2H15V12.500H10.500Z" />
                  <path fill="#222" d="M6.500 13H9.500V15H12V16.500H4V15H6.500Z" />
                </svg>
                <div className="ml-[6px]"><Fit w={55.5}>Displays</Fit></div>
                <div className="-mt-[3px] ml-auto"><CloseBtn /></div>
              </div>
              <div className="flex h-[849px] shrink-0 flex-col border border-[#b5b1ac] bg-white bg-[linear-gradient(#d6d6d6,#d6d6d6)] bg-[length:1px_100%] bg-[position:170px_0] bg-no-repeat">
                {ROWS.map((r, i) => (
                  <TreeRow key={i} r={r} />
                ))}
              </div>
              <div className="flex h-[4px] shrink-0 items-center justify-center">
                <div className="h-px w-[17px] bg-[repeating-linear-gradient(90deg,#aaa6a0_0_1px,transparent_1px_3px)]" />
              </div>
              <div className="h-[78px] shrink-0 border border-[#b5b1ac] px-[4px] pt-[2px] font-bold">
                <Fit w={107}>Global Options</Fit>
              </div>
              <div className="mt-[6px] ml-[2px] flex gap-[6px]">
                <Btn cls="h-[25px] w-[80px]" w={27}>Add</Btn>
                <Btn cls="h-[25px] w-[80px]" w={65.5} off>Duplicate</Btn>
                <Btn cls="h-[25px] w-[80px]" w={55.5} off>Remove</Btn>
                <Btn cls="h-[25px] w-[80px]" w={55.5} off>Rename</Btn>
              </div>
              <div className="mt-[7px] ml-[2px]">
                <Btn cls="h-[24px] w-[53px]" w={39}>Reset</Btn>
              </div>
            </div>

            {/* Left splitter */}
            <div className="flex h-[987px] w-[31px] shrink-0 items-center pl-[3px]">
              <Dots cls="" />
              <svg width="6" height="10" viewBox="0 0 6 10" className="ml-[6px]">
                <path d="M5.500 .5V9.500L.5 5Z" fill="#333" />
              </svg>
            </div>

            <div className="pt-[10px]">
              <Scene />
            </div>

            {/* Right splitter */}
            <div className="flex h-[987px] w-[31px] shrink-0 items-center pl-[14px]">
              <svg width="6" height="10" viewBox="0 0 6 10">
                <path d="M.5 .5V9.500L5.500 5Z" fill="#333" />
              </svg>
              <Dots cls="ml-[8px]" />
            </div>

            {/* Views dock */}
            <div className="flex w-[271px] shrink-0 flex-col pt-px">
              <div className="flex h-[22px] shrink-0 items-center bg-[#c8c8c8] pr-[2px] pl-[4px]">
                <svg width="17" height="16" viewBox="0 0 17 16" fill="#3c3c3c">
                  <path d="M0 4.500L5 7V5.500Q5.500 4 7 4H14.500Q16.500 4.500 16.500 6V10Q16.500 11.500 14.500 12H7Q5.500 12 5 10.500V9L0 11.500Z" />
                </svg>
                <div className="ml-[5px]"><Fit w={40}>Views</Fit></div>
                <div className="-mt-[3px] ml-auto"><CloseBtn /></div>
              </div>
              <div className="mt-[6px] flex h-[25px] shrink-0 items-center">
                <div className="ml-[2px]"><Fit w={36}>Type:</Fit></div>
                <div className="ml-[7px] flex h-[25px] w-[138px] items-center rounded-[3px] border border-[#a5a19c] bg-linear-to-b from-[#fdfdfc] to-[#eeebe8] pl-[4px]">
                  <div className="w-[112px]"><Fit w={112}>TopDownOrtho (</Fit></div>
                  <svg width="8" height="5" viewBox="0 0 8 5" className="ml-[6px]">
                    <path d="M0 .3H8L4 4.700Z" fill="#444" />
                  </svg>
                </div>
                <div className="ml-[6px]"><Btn cls="h-[25px] w-[79px]" w={31}>Zero</Btn></div>
              </div>
              <div className="mt-[8px] flex h-[894px] shrink-0 flex-col border border-[#b5b1ac] bg-white bg-[linear-gradient(#d6d6d6,#d6d6d6)] bg-[length:1px_100%] bg-[position:134px_0] bg-no-repeat leading-[17px]">
                <div className="flex h-[17px] font-bold">
                  <div className="flex w-[20px] items-center pl-[5px]"><Arrow open /></div>
                  <div className="w-[114px] border-r border-[#c9bfb6] bg-[#bbaca1] pl-[3px]"><Fit w={94.5}>Current View</Fit></div>
                  <div className="flex-1 bg-[#bbaca1] pl-[3px]"><Fit w={128}>TopDownOrtho …</Fit></div>
                </div>
                {VIEWS.map(([a, aw, b, bw]) => (
                  <div key={a} className="flex h-[17px]">
                    <div className="w-[134px] pl-[43px]"><Fit w={aw}>{a}</Fit></div>
                    <div className="pl-[3px]"><Fit w={bw}>{b}</Fit></div>
                  </div>
                ))}
              </div>
              <div className="mt-[6px] ml-[2px] flex gap-[6px]">
                <Btn cls="h-[25px] w-[85px]" w={31.5}>Save</Btn>
                <Btn cls="h-[25px] w-[85px]" w={55.5}>Remove</Btn>
                <Btn cls="h-[25px] w-[85px]" w={55.5}>Rename</Btn>
              </div>
              <div className="mt-[3px] mr-[1px] flex justify-end"><Fit w={41}>19 fps</Fit></div>
            </div>
          </div>
        </div>
      </div>
    </div>
  );
}
